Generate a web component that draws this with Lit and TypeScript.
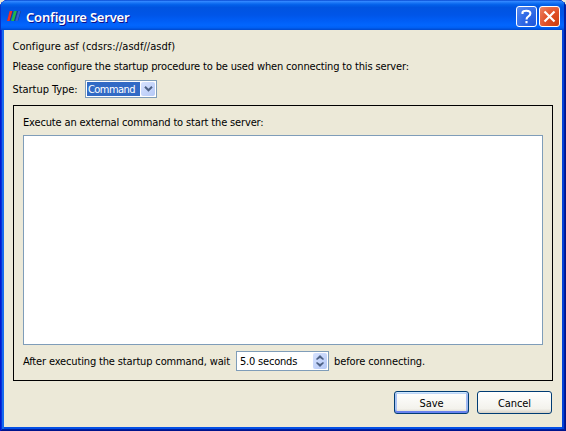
import { LitElement, html, css } from "lit";
import { customElement } from "lit/decorators.js";

@customElement("app-root")
export class AppRoot extends LitElement {
  static styles = css`
    :host {
      display: block;
      width: 566px;
      height: 431px;
      overflow: hidden;
      background: #ece9d8;
      color: #000;
      font: 11px/14px "DejaVu Sans Condensed", "DejaVu Sans", sans-serif;
      font-stretch: condensed;
      letter-spacing: -0.148px;
      white-space: nowrap;
    }
    * { box-sizing: border-box; }
    svg { display: block; }
    .window {
      display: flex;
      flex-direction: column;
      height: 431px;
      padding: 0 4px 4px;
      border-radius: 8px 8px 0 0;
      overflow: hidden;
      background: #0831d9;
      box-shadow: inset 1px 0 #0019cf, inset -1px 0 #00138c, inset 0 -1px #00138c,
        inset 2px 0 #0831d9, inset -2px 0 #001ea0, inset 0 -2px #001ea0,
        inset 4px 0 #166aee, inset -4px 0 #0441d8, inset 0 -4px #0450e6;
    }
    .titlebar {
      display: flex;
      align-items: center;
      flex: none;
      height: 30px;
      margin: 0 -4px;
      padding: 3px 6px 0 7px;
      background: linear-gradient(#0848d0 0, #2f86ff 5%, #1673f4 10%, #0260ea 16%, #0054e0 25%,
        #0055e8 50%, #005df5 68%, #0266fe 84%, #0060f4 92%, #0048cc 100%);
      box-shadow: inset 1px 0 #0733c8, inset -2px 0 #0021a5;
    }
    .logo { margin-top: -2px; }
    .title {
      flex: 1;
      margin-left: 5px;
      color: #fff;
      font: 600 13px/18px "Noto Sans", sans-serif;
      letter-spacing: -0.2px;
      text-shadow: 1px 1px #0f1089;
    }
    .caption {
      width: 21px;
      height: 21px;
      margin-left: 2px;
      border: 1px solid #fff;
      border-radius: 3px;
      background: radial-gradient(circle at 90% 90%, #2058dc 0, #2f69e6 50%, #5a8cf0 100%);
    }
    .caption.close {
      background: radial-gradient(circle at 90% 90%, #d04010 0, #e05028 50%, #ee8568 100%);
    }
    .body {
      flex: 1;
      display: flex;
      flex-direction: column;
      padding: 10px 9px 0 8.5px;
      background: #ece9d8;
    }
    .line { height: 20px; }
    .address { letter-spacing: 0.04px; }
    .row { display: flex; align-items: center; }
    .type { height: 18px; }
    .type .label { width: 72.5px; padding-top: 1px; letter-spacing: -0.05px; }
    .combo {
      display: flex;
      width: 72px;
      height: 18px;
      padding: 1px;
      border: 1px solid #7f9db9;
      background: #fff;
    }
    .value {
      width: 53px;
      height: 14px;
      margin-right: 1px;
      padding-left: 1px;
      background: #316ac5;
      color: #fff;
      line-height: 15px;
      letter-spacing: -0.55px;
    }
    .drop, .steps {
      display: grid;
      place-items: center;
      width: 14px;
      border-radius: 2px;
      background: linear-gradient(135deg, #d6e2fe, #b5c8f6);
    }
    .drop { height: 14px; }
    .panel {
      width: 540px;
      height: 276px;
      margin: 7px 0 0 0.5px;
      padding: 9px;
      border: 1px solid #000;
    }
    .panel .head { height: 20px; line-height: 15px; }
    .editor {
      height: 210px;
      border: 1px solid #7f9db9;
      background: #fff;
    }
    .wait { height: 20px; margin-top: 6px; }
    .wait .lead { width: 213px; padding-top: 1px; }
    .wait .tail { padding-top: 1px; letter-spacing: -0.1px; }
    .spin {
      display: flex;
      width: 93px;
      height: 20px;
      margin-right: 5px;
      padding: 1px 1px 1px 3px;
      border: 1px solid #7f9db9;
      background: #fff;
      line-height: 17px;
      letter-spacing: -0.2px;
    }
    .spin .amount { flex: 1; }
    .steps { height: 16px; }
    .buttons { display: flex; gap: 8px; margin: 10px 0 0 381.5px; }
    .button {
      width: 75px;
      height: 23px;
      border: 1px solid #003c74;
      border-radius: 3px;
      background: linear-gradient(#fff, #f3f2ec 80%, #d6d0c5);
      line-height: 23px;
      text-align: center;
      letter-spacing: -0.1px;
    }
    .button.default {
      box-shadow: inset 0 1px #cee7ff, inset 0 -2px #6982ee, inset 2px 0 #a9c3f4, inset -2px 0 #a0b9f2,
        inset 0 2px #bcd4f6;
    }
  `;

  render() {
    return html`
      <div class="window">
        <div class="titlebar">
          <svg class="logo" width="14" height="10" viewBox="0 0 14 10">
            <path d="M3 0h3.4L3.4 10H0z" fill="#163a88" />
            <path d="M7.5 0H11L8 10H4.6z" fill="#163a88" />
            <path d="M11 0h3l-3 10H8.2z" fill="#163a88" />
            <path d="M2.6 0h2.8L2.6 10H0z" fill="#f03228" />
            <path d="M7 0h2.8L7 10H4.2z" fill="#20b848" />
            <path d="M11.2 0h2.3l-2.8 10H8.4z" fill="#3560d0" />
          </svg>
          <div class="title">Configure Server</div>
          <div class="caption">
            <svg width="19" height="19" viewBox="0 0 19 19" fill="none" stroke="#fff" stroke-width="2.1">
              <path d="M5.5 7V5.4Q6 3.8 9.4 3.8q4 0 4 2.8 0 1.5-2 2.8Q9.5 10.5 9.5 12.4M9.5 14v2.3" />
            </svg>
          </div>
          <div class="caption close">
            <svg width="19" height="19" viewBox="0 0 19 19" fill="none" stroke="#fff" stroke-width="2.2">
              <path d="m4.5 4.5 10 10m0-10-10 10" />
            </svg>
          </div>
        </div>
        <div class="body">
          <div class="line address">Configure asf (cdsrs://asdf//asdf)</div>
          <div class="line">Please configure the startup procedure to be used when connecting to this server:</div>
          <div class="row type">
            <div class="label">Startup Type:</div>
            <div class="combo">
              <div class="value">Command</div>
              <div class="drop">
                <svg width="9" height="6" viewBox="0 0 9 6"><path d="m1 .8 3.5 3.5L8 .8" fill="none" stroke="#4d6185" stroke-width="2" /></svg>
              </div>
            </div>
          </div>
          <div class="panel">
            <div class="head">Execute an external command to start the server:</div>
            <div class="editor"></div>
            <div class="row wait">
              <div class="lead">After executing the startup command, wait</div>
              <div class="spin">
                <div class="amount">5.0 seconds</div>
                <div class="steps">
                  <svg width="8" height="12" viewBox="0 0 8 12"><path d="m0 4 4-4 4 4-1 1-3-2-3 2zM0 8l4 4 4-4-1-1-3 2-3-2z" fill="#4d6185" /></svg>
                </div>
              </div>
              <div class="tail">before connecting.</div>
            </div>
          </div>
          <div class="buttons">
            <div class="button default">Save</div>
            <div class="button">Cancel</div>
          </div>
        </div>
      </div>
    `;
  }
}
